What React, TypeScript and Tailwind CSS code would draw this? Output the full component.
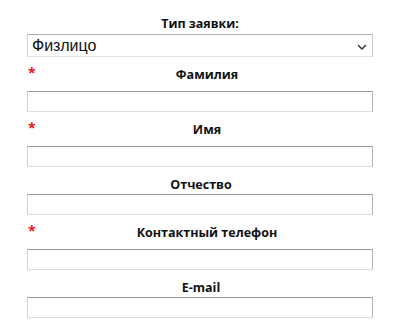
import React from "react";

const labelFont = { fontFamily: '"Open Sans", Verdana, sans-serif' };

function Field({ label, required }: { label: string; required?: boolean }) {
  return (
    <div>
      <div
        className={`relative pt-[11px] text-center text-[12.5px] font-bold leading-[14px] text-[#111] ${
          required ? "h-[34px] pl-[14px]" : "h-[27px] pl-[2px]"
        }`}
        style={labelFont}
      >
        {required && (
          <span className="absolute left-[1px] top-[9px] text-[14px] font-bold text-[#e8141e]">*</span>
        )}
        {label}
      </div>
      <div className="h-[21px] w-full border border-t-[#9a9a9a] border-l-[#d0d0d0] border-r-[#b4b4b4] border-b-[#dedede] bg-white" />
    </div>
  );
}

export default function App() {
  return (
    <div className="h-[330px] w-[400px] overflow-hidden bg-white">
      <div className="ml-[27px] w-[346px]">
        <div
          className="h-[34px] pt-[17px] text-center text-[12.5px] font-bold leading-[14px] text-[#111]"
          style={labelFont}
        >
          Тип заявки:
        </div>
        <div className="flex h-[23px] items-center justify-between border border-t-[#b0b0b0] border-l-[#d4d4d4] border-r-[#c8c8c8] border-b-[#e2e2e2] bg-white pl-[4px] pr-[5px]">
          <span
            className="text-[16px] leading-none text-[#111]"
            style={{ fontFamily: '"Liberation Sans", Arial, sans-serif' }}
          >
            Физлицо
          </span>
          <svg width="10" height="6" viewBox="0 0 10 6" className="mt-[2px]">
            <polyline points="1,1 5,5 9,1" fill="none" stroke="#333" strokeWidth="1.4" />
          </svg>
        </div>
        <Field label="Фамилия" required />
        <Field label="Имя" required />
        <Field label="Отчество" />
        <Field label="Контактный телефон" required />
        <Field label="E-mail" />
      </div>
    </div>
  );
}
